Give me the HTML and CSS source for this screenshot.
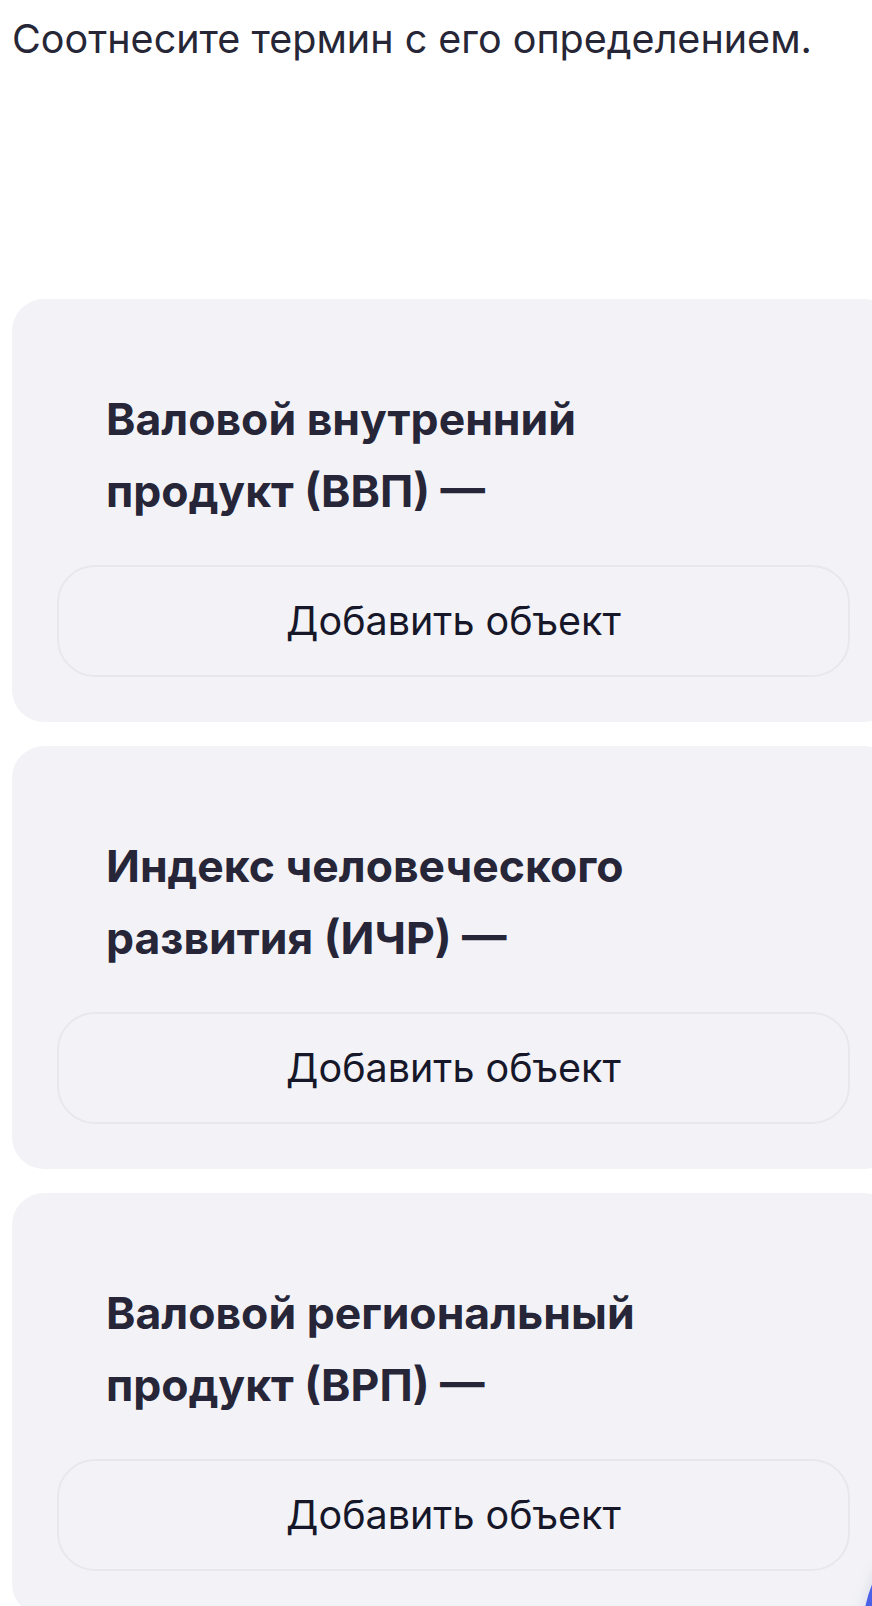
FILE: index.html
```html
<!DOCTYPE html>
<html lang="ru">
<head>
<meta charset="utf-8">
<title>Соотнесите термин</title>
<link rel="stylesheet" href="styles.css">
</head>
<body>
<main class="page">
  <h1 class="task">Соотнесите термин с его определением.</h1>
  <div class="cards">
    <section class="card">
      <p class="term">Валовой внутренний продукт (ВВП) —</p>
      <button class="slot" type="button">Добавить объект</button>
    </section>
    <section class="card">
      <p class="term">Индекс человеческого развития (ИЧР) —</p>
      <button class="slot" type="button">Добавить объект</button>
    </section>
    <section class="card">
      <p class="term">Валовой региональный продукт (ВРП) —</p>
      <button class="slot" type="button">Добавить объект</button>
    </section>
  </div>
</main>
<div class="fab"></div>
</body>
</html>
```
FILE: styles.css
```css
html, body {
  margin: 0;
  padding: 0;
  background: #ffffff;
  overflow: hidden;
}
body {
  font-family: Inter, "Noto Sans", sans-serif;
  width: 872px;
  height: 1606px;
  position: relative;
}
.page {
  padding: 0 0 0 12px;
}
.task {
  margin: 0;
  padding-top: 13px;
  font-size: 39.5px;
  line-height: 52px;
  font-weight: 400;
  color: #262636;
  letter-spacing: 0;
}
.cards {
  margin-top: 234px;
  display: flex;
  flex-direction: column;
  gap: 24px;
}
.card {
  width: 883px;
  box-sizing: border-box;
  background: #f3f3f7;
  border-radius: 32px;
  padding: 84px 45px 45px 45px;
}
.term {
  margin: 0 0 38px 0;
  padding-left: 49px;
  width: 580px;
  font-size: 44.5px;
  line-height: 72px;
  font-weight: 700;
  color: #262638;
}
.slot {
  display: block;
  width: 100%;
  height: 112px;
  box-sizing: border-box;
  border: 2px solid #e7e7ee;
  border-radius: 38px;
  background: #f3f3f7;
  font-family: Inter, "Noto Sans", sans-serif;
  font-size: 39.5px;
  font-weight: 400;
  color: #17172a;
  padding: 0;
}
.fab {
  position: absolute;
  left: 863px;
  top: 1510px;
  width: 240px;
  height: 240px;
  border-radius: 50%;
  background: #4a60e6;
  box-shadow: 0 0 16px rgba(60, 70, 150, 0.15);
}
```
